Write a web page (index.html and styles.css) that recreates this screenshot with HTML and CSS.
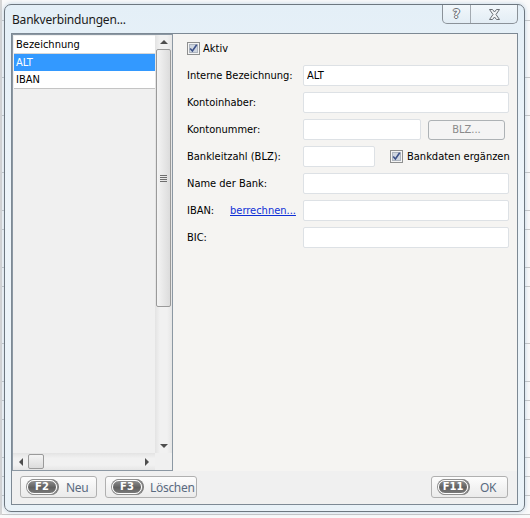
FILE: index.html
```html
<!DOCTYPE html>
<html lang="de">
<head>
    <meta charset="UTF-8">
    <meta name="viewport" content="width=device-width, initial-scale=1.0">
    <title>Bankverbindungen</title>
    <link rel="stylesheet" href="styles.css">
</head>
<body>
<div class="desk">
    <!-- Hauptfenster im Hintergrund (nur Trennlinien sichtbar) -->
    <div class="app">
        <div class="app-row line"></div>
        <div class="app-row tall"></div>
        <div class="app-row line"></div>
        <div class="app-row tall line"></div>
        <div class="app-row tall"></div>
        <div class="app-row line"></div>
        <div class="app-row tall line"></div>
        <div class="app-row line"></div>
        <div class="app-row tall line"></div>
        <div class="app-row line"></div>
        <div class="app-row tall"></div>
        <div class="app-row line"></div>
        <div class="app-row tall line"></div>
        <div class="app-row line"></div>
        <div class="app-row line"></div>
        <div class="app-row tall line"></div>
        <div class="app-row line"></div>
        <div class="app-row line"></div>
        <div class="app-row line"></div>
    </div>

    <!-- Dialog Bankverbindungen -->
    <div class="window">
        <div class="titlebar">
            <span class="title">Bankverbindungen...</span>
            <div class="caption-buttons">
                <button class="cap help"><span>?</span></button>
                <button class="cap close">
                    <svg width="13" height="11" viewBox="0 0 13 11">
                        <path d="M1.5 0.5h3l2 2.5 2-2.5h3l-3.5 5 3.5 5h-3l-2-2.5-2 2.5h-3l3.5-5z"
                              fill="#f2f4f6" stroke="#6a6f75" stroke-width="1" stroke-linejoin="round"/>
                    </svg>
                </button>
            </div>
        </div>

        <div class="client">
            <div class="main">
                <div class="listbox">
                    <div class="rows">
                        <div class="row head">Bezeichnung</div>
                        <div class="row selected">ALT</div>
                        <div class="row last">IBAN</div>
                    </div>
                    <div class="vscroll">
                        <span class="arrow up"></span>
                        <div class="vthumb"><span class="grip"></span></div>
                        <span class="arrow down"></span>
                    </div>
                    <div class="hscroll">
                        <span class="arrow left"></span>
                        <div class="hthumb"></div>
                        <span class="arrow right"></span>
                    </div>
                    <div class="corner"></div>
                </div>

                <div class="details">
                    <label class="check">
                        <svg class="box" width="13" height="13" viewBox="0 0 13 13">
                            <rect x="0.5" y="0.5" width="12" height="12" fill="#f4f4f4" stroke="#8e8f8f"/>
                            <rect x="2.5" y="2.5" width="8" height="8" fill="#cfd6e0" stroke="#aeb5bf"/>
                            <path d="M3.2 6.4l2.2 2.6 4.3-6.2" fill="none" stroke="#3d5188" stroke-width="1.6"/>
                        </svg>
                        Aktiv
                    </label>

                    <div class="form">
                        <span class="lbl">Interne Bezeichnung:</span>
                        <input class="field" type="text" value="ALT">

                        <span class="lbl">Kontoinhaber:</span>
                        <input class="field" type="text">

                        <span class="lbl">Kontonummer:</span>
                        <div class="pair">
                            <input class="field konto" type="text">
                            <button class="blz" disabled>BLZ...</button>
                        </div>

                        <span class="lbl">Bankleitzahl (BLZ):</span>
                        <div class="pair">
                            <input class="field bankleitzahl" type="text">
                            <label class="check ergaenzen">
                                <svg class="box" width="13" height="13" viewBox="0 0 13 13">
                                    <rect x="0.5" y="0.5" width="12" height="12" fill="#f4f4f4" stroke="#8e8f8f"/>
                                    <rect x="2.5" y="2.5" width="8" height="8" fill="#cfd6e0" stroke="#aeb5bf"/>
                                    <path d="M3.2 6.4l2.2 2.6 4.3-6.2" fill="none" stroke="#3d5188" stroke-width="1.6"/>
                                </svg>
                                Bankdaten ergänzen
                            </label>
                        </div>

                        <span class="lbl">Name der Bank:</span>
                        <input class="field" type="text">

                        <span class="lbl iban"><span class="iban-text">IBAN:</span><a href="#">berrechnen...</a></span>
                        <input class="field" type="text">

                        <span class="lbl">BIC:</span>
                        <input class="field" type="text">
                    </div>
                </div>
            </div>

            <div class="footer">
                <button class="btn neu"><span class="key">F2</span>Neu</button>
                <button class="btn loeschen"><span class="key">F3</span>Löschen</button>
                <button class="btn ok"><span class="key">F11</span>OK</button>
            </div>
        </div>
    </div>
</div>
</body>
</html>
```

FILE: styles.css
```css
* {
    box-sizing: border-box;
}

body {
    margin: 0;
    font-family: "DejaVu Sans Condensed", "DejaVu Sans", sans-serif;
    font-size: 11px;
    color: #000;
}

.desk {
    position: relative;
    width: 530px;
    height: 518px;
    overflow: hidden;
    background: #fafafa;
}

/* Hintergrundfenster */
.app {
    display: flex;
    flex-direction: column;
    padding-top: 2px;
    border-left: 2px solid #d6d6d6;
}

.app-row {
    height: 19px;
}

.app-row.tall {
    height: 38px;
}

.app-row.line {
    border-bottom: 1px solid #c9c9c9;
}

/* Dialogfenster */
.window {
    position: absolute;
    left: 4px;
    top: 4px;
    width: 521px;
    height: 508px;
    display: flex;
    flex-direction: column;
    padding: 0 6px 6px 6px;
    border: 1px solid #6d7780;
    border-radius: 7px;
    background: linear-gradient(180deg, #e4eff7 0%, #eef5fa 40%, #e9f2f8 100%);
    box-shadow: 0 0 5px rgba(110, 160, 200, 0.45);
}

.titlebar {
    height: 28px;
    display: flex;
    align-items: center;
}

.title {
    padding-left: 1px;
    font-family: "Noto Sans", sans-serif;
    font-size: 12px;
    letter-spacing: -0.2px;
    color: #1a1a1a;
}

.caption-buttons {
    align-self: flex-start;
    margin-left: auto;
    display: flex;
    height: 19px;
    border: 1px solid #8b9299;
    border-top: none;
    border-radius: 0 0 5px 5px;
    background: linear-gradient(180deg, rgba(255, 255, 255, 0.5), rgba(225, 235, 243, 0.6));
    overflow: hidden;
}

.cap {
    border: none;
    margin: 0;
    padding: 0;
    background: transparent;
    display: flex;
    align-items: center;
    justify-content: center;
}

.cap.help {
    width: 28px;
    border-right: 1px solid #a3aab1;
}

.cap.help span {
    font-family: "DejaVu Sans", sans-serif;
    font-weight: bold;
    font-size: 12px;
    color: #f3f5f7;
    text-shadow: 1px 0 0 #6a6f75, -1px 0 0 #6a6f75, 0 1px 0 #6a6f75, 0 -1px 0 #6a6f75;
}

.cap.close {
    width: 46px;
}

.client {
    flex: 1;
    display: flex;
    flex-direction: column;
    border: 1px solid #7d8994;
    background: #f0f0f0;
}

.main {
    flex: 1;
    display: flex;
}

/* Liste links */
.listbox {
    width: 161px;
    display: grid;
    grid-template-columns: 1fr 17px;
    grid-template-rows: 1fr 17px;
    border: 1px solid #8c98a3;
    background: #f0f0f0;
}

.rows {
    padding: 1px 0 0 1px;
    display: flex;
    flex-direction: column;
}

.row {
    height: 17px;
    line-height: 17px;
    padding-left: 2px;
    background: #fff;
}

.row.head {
    height: 18px;
    border-bottom: 1px solid #d7d7d7;
}

.row.selected {
    background: #3399ff;
    color: #fff;
}

.row.last {
    height: 18px;
    border-bottom: 1px solid #c4c4c4;
}

.vscroll {
    display: flex;
    flex-direction: column;
    align-items: center;
    background: linear-gradient(90deg, #e3e3e3, #f1f1f1 30%, #f1f1f1 70%, #e6e6e6);
}

.hscroll {
    display: flex;
    align-items: center;
    background: linear-gradient(180deg, #e3e3e3, #f1f1f1 30%, #f1f1f1 70%, #e6e6e6);
}

.corner {
    background: #f0f0f0;
}

.arrow {
    width: 0;
    height: 0;
    border: 4px solid transparent;
}

.arrow.up {
    margin: 5px 0 5px;
    border-top: none;
    border-bottom: 4px solid #4e4e4e;
}

.arrow.down {
    margin: auto 0 5px;
    border-bottom: none;
    border-top: 4px solid #4e4e4e;
}

.arrow.left {
    margin: 0 5px 0 6px;
    border-left: none;
    border-right: 4px solid #4e4e4e;
}

.arrow.right {
    margin: 0 6px 0 auto;
    border-right: none;
    border-left: 4px solid #4e4e4e;
}

.vthumb {
    width: 15px;
    height: 258px;
    display: flex;
    align-items: center;
    justify-content: center;
    border: 1px solid #9a9a9a;
    border-radius: 2px;
    background: linear-gradient(90deg, #f4f4f4, #e8e8e8 50%, #dcdcdc);
}

.grip {
    width: 7px;
    height: 7px;
    background: repeating-linear-gradient(180deg, #6e6e6e 0 1px, transparent 1px 2px);
}

.hthumb {
    width: 16px;
    height: 15px;
    border: 1px solid #9a9a9a;
    border-radius: 2px;
    background: linear-gradient(180deg, #f4f4f4, #e8e8e8 50%, #dcdcdc);
}

/* Eingabebereich rechts */
.details {
    flex: 1;
    padding: 7px 8px 0 14px;
    background: #f5f4f2;
}

.check {
    display: flex;
    align-items: center;
    gap: 3px;
    height: 14px;
    white-space: nowrap;
}

.check .box {
    flex: none;
}

.form {
    margin-top: 10px;
    display: grid;
    grid-template-columns: 116px 206px;
    grid-auto-rows: 21px;
    row-gap: 6px;
    align-items: center;
}

.lbl {
    white-space: nowrap;
}

.iban {
    display: flex;
}

.iban-text {
    width: 43px;
}

.iban a {
    color: #0f2fd6;
    text-decoration: underline;
}

.field {
    width: 100%;
    height: 21px;
    margin: 0;
    padding: 0 3px;
    font: inherit;
    border: 1px solid #dde1e5;
    border-radius: 2px;
    background: #fff;
    outline: none;
}

.pair {
    display: flex;
    align-items: center;
    height: 21px;
}

.field.konto {
    width: 118px;
    flex: none;
}

.field.bankleitzahl {
    width: 72px;
    flex: none;
}

.blz {
    flex: none;
    margin-left: 7px;
    width: 77px;
    height: 20px;
    font: inherit;
    color: #8a8a8a;
    border: 1px solid #adb2b5;
    border-radius: 3px;
    background: #f4f4f4;
}

.ergaenzen {
    flex: none;
    margin-left: 15px;
    gap: 4px;
}

/* Knopfleiste */
.footer {
    height: 33px;
    display: flex;
    align-items: flex-start;
    padding: 5px 9px 0 8px;
    gap: 8px;
    background: #f0f0f0;
}

.btn {
    height: 22px;
    display: flex;
    align-items: center;
    gap: 9px;
    padding: 0 0 0 6px;
    font-family: "Noto Sans", sans-serif;
    font-size: 12px;
    letter-spacing: -0.3px;
    color: #5a6a80;
    border: 1px solid #b0b0b0;
    border-radius: 3px;
    background: linear-gradient(180deg, #fdfdfd, #f3f3f3 50%, #ebebeb);
}

.btn.neu {
    width: 77px;
}

.btn.loeschen {
    width: 92px;
    gap: 8px;
}

.btn.ok {
    width: 77px;
    margin-left: auto;
    gap: 12px;
}

.key {
    width: 30px;
    height: 14px;
    line-height: 12px;
    text-align: center;
    font-family: "DejaVu Sans", sans-serif;
    font-weight: bold;
    font-size: 10px;
    letter-spacing: 0;
    color: #fff;
    border: 1px solid #fff;
    border-radius: 7px;
    background: linear-gradient(180deg, #8c8c8c, #606060 55%, #7a7a7a);
    box-shadow: 0 0 0 1px #8f8f8f, 1px 0 0 1px #777;
}
```
